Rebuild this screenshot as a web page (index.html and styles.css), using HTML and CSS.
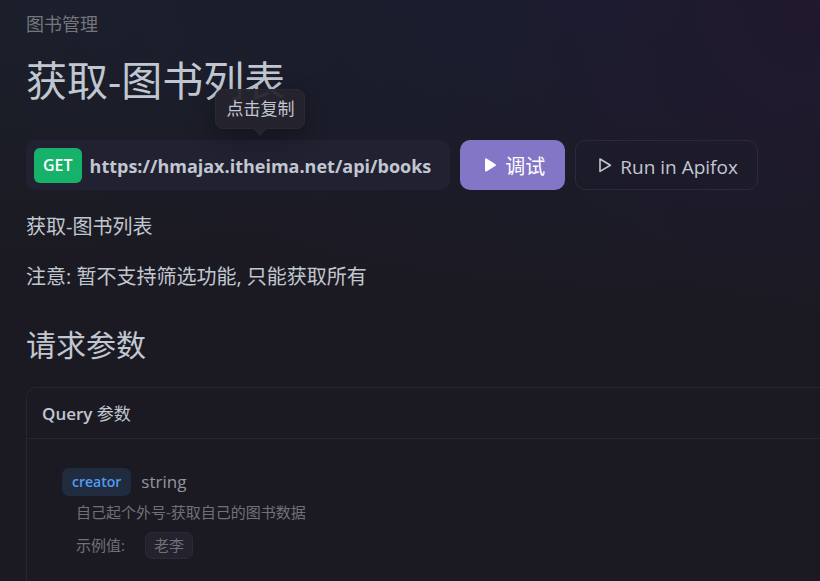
FILE: index.html
```html
<!DOCTYPE html>
<html lang="zh-CN">
<head>
<meta charset="utf-8">
<meta name="viewport" content="width=device-width, initial-scale=1">
<title>获取-图书列表</title>
<link rel="stylesheet" href="styles.css">
</head>
<body>
<main class="page">
  <a class="crumb" href="#">图书管理</a>
  <h1 class="title">获取-图书列表</h1>
  <div class="toolbar">
    <div class="endpoint">
      <span class="method">GET</span>
      <button class="url" type="button" aria-describedby="copy-tip">https://hmajax.itheima.net/api/books<span class="tooltip" id="copy-tip" role="tooltip">点击复制</span></button>
    </div>
    <button class="btn btn-primary" type="button">
      <svg class="icon" viewBox="0 0 16 16" aria-hidden="true"><path d="M4 2.4v11.2L13 8z" fill="currentColor" stroke="currentColor" stroke-width="2" stroke-linejoin="round"/></svg>
      <span class="btn-label">调试</span>
    </button>
    <button class="btn" type="button">
      <svg class="icon" viewBox="0 0 16 16" aria-hidden="true"><path d="M3 2v12.4L13.4 8.2z" fill="none" stroke="currentColor" stroke-width="1.6" stroke-linejoin="round"/></svg>
      <span class="btn-label">Run in Apifox</span>
    </button>
  </div>
  <div class="description">
    <p>获取-图书列表</p>
    <p>注意: 暂不支持筛选功能, 只能获取所有</p>
  </div>
  <h2 class="section-title">请求参数</h2>
  <section class="card">
    <h3 class="card-head"><b>Query</b> 参数</h3>
    <div class="param">
      <div class="param-head"><span class="param-name">creator</span><span class="param-type">string</span></div>
      <div class="param-detail">
        <p>自己起个外号-获取自己的图书数据</p>
        <div class="example"><span>示例值:</span><code class="chip">老李</code></div>
      </div>
    </div>
  </section>
</main>
</body>
</html>
```
FILE: styles.css
```css
* {
  box-sizing: border-box;
}

body {
  margin: 0;
  background-color: #1b1a22;
  background-image:
    radial-gradient(ellipse 340px 320px at 100% 0, rgba(34, 24, 46, 0.8), transparent),
    radial-gradient(ellipse 680px 320px at 75% 0, rgba(27, 29, 50, 0.9), transparent),
    radial-gradient(ellipse 600px 260px at 0 0, rgba(27, 33, 44, 0.9), transparent);
  background-repeat: no-repeat;
  color: #c1c7d0;
  font-family: "Open Sans", "Noto Sans CJK SC", sans-serif;
  font-size: 20px;
  line-height: 30px;
}

h1, h2, h3, p {
  margin: 0;
  font-weight: 400;
}

button {
  font: inherit;
  color: inherit;
  cursor: pointer;
}

.page {
  display: flex;
  flex-direction: column;
  min-height: 100vh;
  padding: 12px 0 0 26px;
}

.crumb {
  color: #75767b;
  font-size: 18px;
  line-height: 24px;
  text-decoration: none;
}

.title {
  margin: 16px 0 32px;
  font-size: 41px;
  line-height: 56px;
}

.toolbar {
  display: flex;
  gap: 10px;
  height: 50px;
}

.endpoint {
  display: flex;
  align-items: center;
  gap: 8px;
  padding: 0 19px 0 8px;
  border-radius: 10px;
  background: #222132;
}

.method {
  padding: 0 9px;
  border-radius: 6px;
  background: #17b26a;
  color: #fff;
  font-size: 16px;
  font-weight: 600;
  line-height: 35px;
}

.url {
  position: relative;
  padding: 2px 0 0;
  border: 0;
  background: none;
  font-weight: 700;
  font-size: 18px;
  white-space: nowrap;
}

.tooltip {
  position: absolute;
  bottom: 100%;
  left: 50%;
  margin-bottom: 20px;
  padding: 0 10px;
  border: 1px solid #2b2934;
  border-radius: 8px;
  background: rgba(37, 35, 46, 0.94);
  box-shadow: 0 8px 24px rgba(0, 0, 0, 0.3);
  font-size: 17px;
  font-weight: 400;
  line-height: 38px;
  transform: translateX(-50%);
}

.tooltip::after {
  content: "";
  position: absolute;
  top: 100%;
  left: 50%;
  margin-left: -8px;
  border: 8px solid transparent;
  border-top-color: #25232e;
  border-bottom-width: 0;
}

.btn {
  display: flex;
  align-items: center;
  gap: 7px;
  padding: 0 19px 0 21px;
  border: 1px solid #2b2a38;
  border-radius: 10px;
  background: transparent;
  font-size: 19px;
  white-space: nowrap;
}

.btn-primary {
  padding: 0 20px 0 22px;
  border: 0;
  background: #8376c7;
  color: #fff;
  font-size: 20px;
}

.btn-label {
  padding-top: 4px;
}

.icon {
  width: 16px;
  height: 16px;
}

.description {
  display: grid;
  gap: 20px;
  margin: 22px 0 33px;
}

.section-title {
  margin-bottom: 22px;
  font-size: 30px;
  line-height: 40px;
}

.card {
  flex: 1;
  border: 1px solid #262530;
  border-width: 1px 0 0 1px;
  border-radius: 10px 0 0 0;
}

.card-head {
  padding: 2px 15px 0;
  border-bottom: 1px solid #262530;
  font-size: 17px;
  line-height: 48px;
}

.card-head b {
  font-weight: 600;
}

.param {
  padding: 28px 35px 0;
}

.param-head {
  display: flex;
  align-items: center;
  gap: 10px;
}

.param-name {
  padding: 0 10px;
  border-radius: 7px;
  background: #202b3e;
  color: #539bf5;
  font-size: 14px;
  font-weight: 600;
  line-height: 28px;
}

.param-type {
  color: #94959c;
  font-size: 17px;
  font-weight: 500;
}

.param-detail {
  padding-left: 14px;
  color: #707177;
  font-size: 15px;
}

.example {
  display: flex;
  align-items: center;
  gap: 20px;
  margin-top: 3px;
}

.chip {
  padding: 0 8px 2px;
  border: 1px solid #2c2a38;
  border-radius: 7px;
  background: #23222d;
  font-family: "Noto Sans CJK SC", sans-serif;
  font-size: 15px;
  line-height: 23px;
}
```
